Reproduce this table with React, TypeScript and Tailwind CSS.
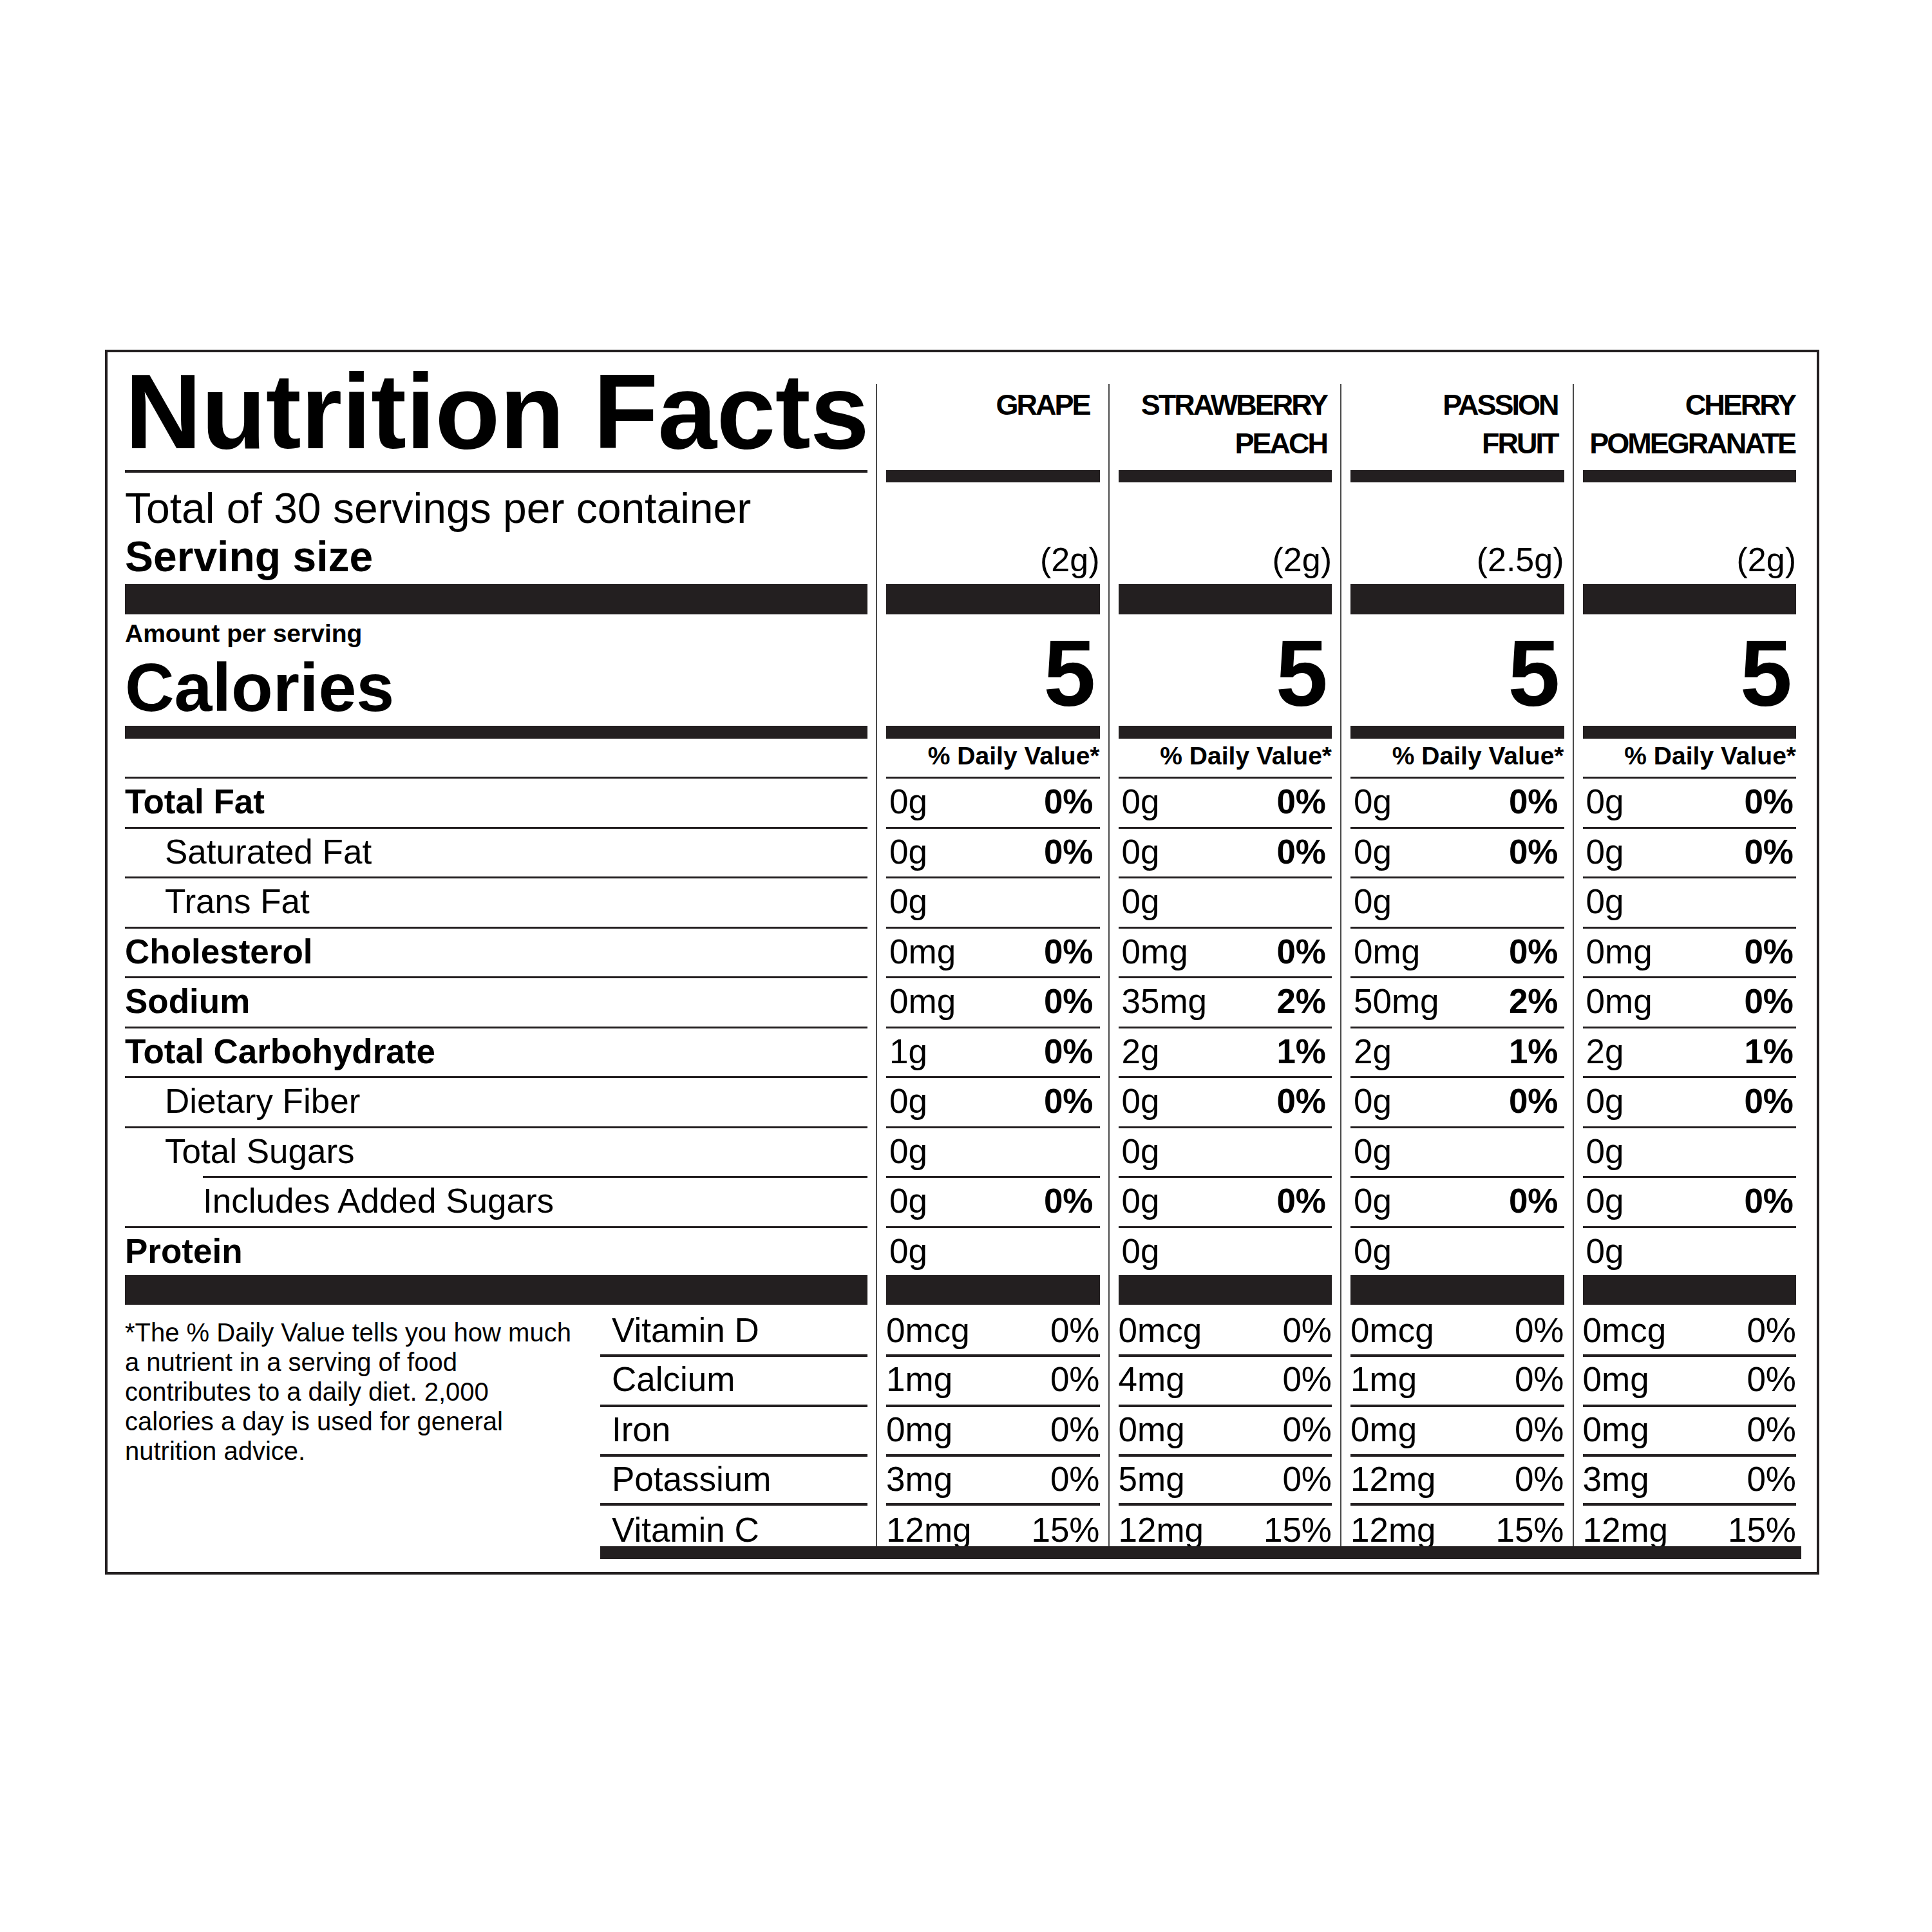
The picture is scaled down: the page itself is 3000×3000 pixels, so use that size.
import React from "react"

type Column = {
  name: string[]
  headPad: string
  valuePad: string
  weight: string
  calories: string
  values: [string, string][]
  vitamins: [string, string][]
}

const columns: Column[] = [
  {
    name: ["GRAPE"],
    headPad: "pr-[16px]",
    valuePad: "pr-[10px]",
    weight: "(2g)",
    calories: "5",
    values: [
      ["0g", "0%"],
      ["0g", "0%"],
      ["0g", ""],
      ["0mg", "0%"],
      ["0mg", "0%"],
      ["1g", "0%"],
      ["0g", "0%"],
      ["0g", ""],
      ["0g", "0%"],
      ["0g", ""],
    ],
    vitamins: [
      ["0mcg", "0%"],
      ["1mg", "0%"],
      ["0mg", "0%"],
      ["3mg", "0%"],
      ["12mg", "15%"],
    ],
  },
  {
    name: ["STRAWBERRY", "PEACH"],
    headPad: "pr-[8px]",
    valuePad: "pr-[9px]",
    weight: "(2g)",
    calories: "5",
    values: [
      ["0g", "0%"],
      ["0g", "0%"],
      ["0g", ""],
      ["0mg", "0%"],
      ["35mg", "2%"],
      ["2g", "1%"],
      ["0g", "0%"],
      ["0g", ""],
      ["0g", "0%"],
      ["0g", ""],
    ],
    vitamins: [
      ["0mcg", "0%"],
      ["4mg", "0%"],
      ["0mg", "0%"],
      ["5mg", "0%"],
      ["12mg", "15%"],
    ],
  },
  {
    name: ["PASSION", "FRUIT"],
    headPad: "pr-[10px]",
    valuePad: "pr-[9px]",
    weight: "(2.5g)",
    calories: "5",
    values: [
      ["0g", "0%"],
      ["0g", "0%"],
      ["0g", ""],
      ["0mg", "0%"],
      ["50mg", "2%"],
      ["2g", "1%"],
      ["0g", "0%"],
      ["0g", ""],
      ["0g", "0%"],
      ["0g", ""],
    ],
    vitamins: [
      ["0mcg", "0%"],
      ["1mg", "0%"],
      ["0mg", "0%"],
      ["12mg", "0%"],
      ["12mg", "15%"],
    ],
  },
  {
    name: ["CHERRY", "POMEGRANATE"],
    headPad: "pr-[2px]",
    valuePad: "pr-[4px]",
    weight: "(2g)",
    calories: "5",
    values: [
      ["0g", "0%"],
      ["0g", "0%"],
      ["0g", ""],
      ["0mg", "0%"],
      ["0mg", "0%"],
      ["2g", "1%"],
      ["0g", "0%"],
      ["0g", ""],
      ["0g", "0%"],
      ["0g", ""],
    ],
    vitamins: [
      ["0mcg", "0%"],
      ["0mg", "0%"],
      ["0mg", "0%"],
      ["3mg", "0%"],
      ["12mg", "15%"],
    ],
  },
]

// indent: 0 = none, 1 = sub item, 2 = sub-sub item (line indented too)
const nutrients = [
  { label: "Total Fat", bold: true, indent: 0 },
  { label: "Saturated Fat", bold: false, indent: 1 },
  { label: "Trans Fat", bold: false, indent: 1 },
  { label: "Cholesterol", bold: true, indent: 0 },
  { label: "Sodium", bold: true, indent: 0 },
  { label: "Total Carbohydrate", bold: true, indent: 0 },
  { label: "Dietary Fiber", bold: false, indent: 1 },
  { label: "Total Sugars", bold: false, indent: 1 },
  { label: "Includes Added Sugars", bold: false, indent: 2 },
]

const vitaminNames = ["Vitamin D", "Calcium", "Iron", "Potassium", "Vitamin C"]

// row heights for the vitamin block, shared by label column and flavour columns
const vitaminRow = [
  "h-[77px] pt-[14px]",
  "h-[78px] border-t-4 pt-[9px]",
  "h-[77px] border-t-4 pt-[9px]",
  "h-[76px] border-t-4 pt-[9px]",
  "h-[67px] border-t-4 pt-[12px]",
]

function FlavorColumn({ col }: { col: Column }) {
  return (
    <div className="ml-[13px] mt-[49px] border-l-2 border-[#4a4a4a] pl-[14px]">
      <div className="flex w-[331.5px] flex-col">
        {/* Header */}
        <div className={`h-[134px] pt-[3px] text-right text-[45px] font-bold leading-[60px] tracking-[-3px] ${col.headPad}`}>
          {col.name.map((n) => (
            <div key={n}>{n}</div>
          ))}
        </div>
        <div className="h-[19px] bg-[#231f20]" />
        <div className="flex h-[158px] items-end justify-end pb-[12px] text-[52px] leading-[52px]">{col.weight}</div>
        <div className="h-[47px] bg-[#231f20]" />
        <div className="h-[173px] pr-[6px] pt-[19px] text-right text-[146px] font-bold leading-[146px]">{col.calories}</div>
        <div className="h-[20px] bg-[#231f20]" />
        <div className="h-[59px] pt-[7px] text-right text-[39px] font-bold leading-[39px]">% Daily Value*</div>

        {/* Nutrients */}
        {col.values.map(([amount, pct], i) => (
          <div
            key={i}
            className={`flex justify-between border-t-[3px] border-[#231f20] pl-[5px] pt-[10px] text-[53px] leading-[52px] ${col.valuePad} ${
              i === 9 ? "h-[76.5px]" : "h-[77.5px]"
            }`}
          >
            <span>{amount}</span>
            <span className="font-bold">{pct}</span>
          </div>
        ))}
        <div className="h-[46px] bg-[#231f20]" />

        {/* Vitamins */}
        {col.vitamins.map(([amount, pct], i) => (
          <div key={i} className={`flex justify-between border-[#231f20] text-[53px] leading-[52px] ${vitaminRow[i]}`}>
            <span>{amount}</span>
            <span>{pct}</span>
          </div>
        ))}
      </div>
    </div>
  )
}

export default function App() {
  return (
    <div className="h-[3000px] w-[3000px] bg-white pl-[163px] pt-[543px] font-['Liberation_Sans',Arial,sans-serif] text-black">
      <div className="flex h-[1902px] w-[2662px] flex-col border-4 border-[#231f20] pl-[27px]">
        <div className="flex">
          {/* Left labels */}
          <div className="flex w-[1153px] flex-col">
            <div className="h-[183px] whitespace-nowrap pt-[10px] text-[165px] font-bold leading-[165px] tracking-[-0.6px]">
              Nutrition Facts
            </div>
            <div className="h-[4px] bg-[#231f20]" />
            <div className="h-[173px] pt-[18px] text-[66px] leading-[75px]">
              <div>Total of 30 servings per container</div>
              <div className="font-bold">Serving size</div>
            </div>
            <div className="h-[47px] bg-[#231f20]" />
            <div className="h-[173px] pt-[10px] font-bold">
              <div className="text-[39px] leading-[39px]">Amount per serving</div>
              <div className="mt-[11px] text-[106px] leading-[106px]">Calories</div>
            </div>
            <div className="h-[20px] bg-[#231f20]" />
            <div className="h-[59px]" />

            {nutrients.map((n) =>
              n.indent === 2 ? (
                <div key={n.label} className="h-[77.5px] pl-[121px]">
                  <div className="h-full border-t-[3px] border-[#231f20] pt-[10px] text-[53px] leading-[52px]">{n.label}</div>
                </div>
              ) : (
                <div
                  key={n.label}
                  className={`h-[77.5px] border-t-[3px] border-[#231f20] pt-[10px] text-[53px] leading-[52px] ${
                    n.bold ? "font-bold" : ""
                  } ${n.indent === 1 ? "pl-[62px]" : ""}`}
                >
                  {n.label}
                </div>
              ),
            )}
            <div className="h-[76.5px] border-t-[3px] border-[#231f20] pt-[10px] text-[53px] font-bold leading-[52px]">Protein</div>
            <div className="h-[46px] bg-[#231f20]" />

            <div className="flex h-[375px]">
              <div className="w-[738px] pt-[20px] text-[40px] leading-[46px]">
                *The % Daily Value tells you how much
                <br />
                a nutrient in a serving of food
                <br />
                contributes to a daily diet. 2,000
                <br />
                calories a day is used for general
                <br />
                nutrition advice.
              </div>
              <div className="flex w-[415px] flex-col">
                {vitaminNames.map((v, i) => (
                  <div key={v} className={`border-[#231f20] pl-[18px] text-[53px] leading-[52px] ${vitaminRow[i]}`}>
                    {v}
                  </div>
                ))}
              </div>
            </div>
          </div>

          {columns.map((c) => (
            <FlavorColumn key={c.name.join(" ")} col={c} />
          ))}
        </div>

        <div className="ml-[738px] h-[20px] w-[1865px] bg-[#231f20]" />
      </div>
    </div>
  )
}
